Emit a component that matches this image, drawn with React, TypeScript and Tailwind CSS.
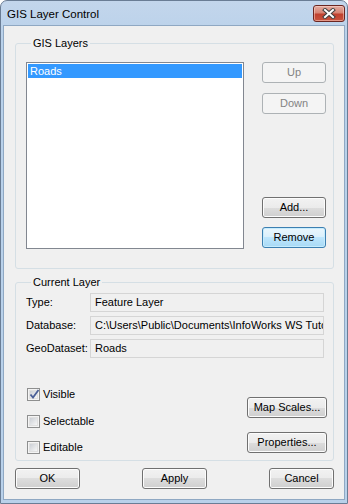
import React from "react";

const font = { fontFamily: '"Liberation Sans", Arial, sans-serif' };

function Btn({
  children,
  disabled,
  focused,
  w = "w-[65px]",
}: {
  children: React.ReactNode;
  disabled?: boolean;
  focused?: boolean;
  w?: string;
}) {
  let cls =
    "h-[21px] rounded-[3px] border flex items-center justify-center text-[11px] leading-[13px] ";
  if (disabled) {
    cls += "border-[#adb2b5] bg-[#f4f4f4] text-[#838383]";
  } else if (focused) {
    cls +=
      "border-[#3c7fb1] text-black bg-[linear-gradient(#eaf6fd_0%,#d9f0fc_50%,#bee6fd_50%,#a7d9f5_100%)] shadow-[inset_0_0_0_1px_#c6ecfd]";
  } else {
    cls +=
      "border-[#707070] text-black bg-[linear-gradient(#f2f2f2_0%,#ebebeb_50%,#dddddd_50%,#cfcfcf_100%)] shadow-[inset_0_0_0_1px_#fcfcfc]";
  }
  return <div className={`${cls} ${w}`}>{children}</div>;
}

function Check({ checked, label }: { checked?: boolean; label: string }) {
  return (
    <div className="flex items-center h-[13px]">
      <div className="w-[13px] h-[13px] border border-[#8e8f8f] bg-[#f4f4f4] p-[1px]">
        <div className="w-full h-full bg-[linear-gradient(135deg,#cbcfd5,#f6f6f6)] border border-[#e0e0e0] relative">
          {checked && (
            <svg
              className="absolute left-[-1px] top-[-2px]"
              width="11"
              height="11"
              viewBox="0 0 11 11"
            >
              <path
                d="M1.5 5.5 L4 8.5 L9.5 1"
                fill="none"
                stroke="#4a5f97"
                strokeWidth="1.8"
              />
            </svg>
          )}
        </div>
      </div>
      <span className="ml-[3px] text-[11px] leading-[13px] text-black">{label}</span>
    </div>
  );
}

function Field({ label, value }: { label: string; value: string }) {
  return (
    <div className="flex items-center h-[19px]">
      <div className="w-[64px] text-[11px] leading-[13px]">{label}</div>
      <div className="w-[234px] h-[19px] border border-[#d5d5d5] bg-[#f0f0f0] flex items-center pl-[4px] overflow-hidden whitespace-nowrap text-[11px] leading-[13px]">
        {value}
      </div>
    </div>
  );
}

export default function App() {
  return (
    <div
      className="w-[348px] h-[504px] bg-[linear-gradient(#c3d6ec,#b9d1ea_40px,#b9d1ea)] border border-[#6a7d95] rounded-t-[7px] flex flex-col text-black"
      style={font}
    >
      {/* title bar */}
      <div className="h-[24px] flex items-start shrink-0">
        <div className="pl-[6px] pt-[6px] text-[11.5px] leading-[14px] text-black">
          GIS Layer Control
        </div>
        <div className="ml-auto mr-[2px] mt-[4px] w-[32px] h-[17px] rounded-[3px] border border-[#6b2621] bg-[linear-gradient(#e3aca2_0%,#d78474_45%,#c0412f_55%,#c9543f_100%)] shadow-[inset_0_0_0_1px_rgba(255,220,210,0.5)] flex items-center justify-center">
          <svg width="14" height="11" viewBox="0 0 14 11">
            <path
              d="M3 2 L11 9 M11 2 L3 9"
              stroke="#3f3f3f"
              strokeWidth="4"
              strokeLinecap="square"
            />
            <path
              d="M3 2 L11 9 M11 2 L3 9"
              stroke="#ffffff"
              strokeWidth="2"
              strokeLinecap="square"
            />
          </svg>
        </div>
      </div>

      {/* client */}
      <div className="flex-1 mx-[2px] mb-[3px] border border-[#8fa8c3] bg-[#f0f0f0] pl-[11px] pr-[10px] pt-[10px] flex flex-col">
        <fieldset className="border border-[#d5dfe5] rounded-[3px] h-[233px] pl-[10px] pr-[7px] pt-[12px] pb-[19px] min-w-0">
          <legend className="ml-[5px] px-[2px] text-[11px] leading-[14px]">GIS Layers</legend>
          <div className="flex">
            <div className="w-[218px] h-[187px] border border-[#828790] bg-white p-[1px]">
              <div className="h-[14px] bg-[#3399ff] text-white text-[11px] leading-[14px] pl-[2px]">
                Roads
              </div>
            </div>
            <div className="ml-[18px] flex flex-col">
              <Btn disabled w="w-[64px]">Up</Btn>
              <div className="mt-[10px]">
                <Btn disabled w="w-[64px]">Down</Btn>
              </div>
              <div className="mt-auto">
                <Btn w="w-[64px]">Add...</Btn>
              </div>
              <div className="mt-[9px] mb-[1px]">
                <Btn focused w="w-[64px]">Remove</Btn>
              </div>
            </div>
          </div>
        </fieldset>

        <fieldset className="mt-[6px] border border-[#d5dfe5] rounded-[3px] pl-[10px] pr-[6px] pt-[4px] pb-[6px] min-w-0">
          <legend className="ml-[5px] px-[2px] text-[11px] leading-[14px]">Current Layer</legend>
          <div className="flex flex-col gap-[4px]">
            <Field label="Type:" value="Feature Layer" />
            <Field
              label="Database:"
              value="C:\Users\Public\Documents\InfoWorks WS Tutorial\GIS"
            />
            <Field label="GeoDataset:" value="Roads" />
          </div>
          <div className="mt-[30px] flex items-start justify-between">
            <div className="flex flex-col pl-[1px]">
              <Check checked label="Visible" />
              <div className="mt-[14px]">
                <Check label="Selectable" />
              </div>
              <div className="mt-[13px]">
                <Check label="Editable" />
              </div>
            </div>
            <div className="flex flex-col mt-[9px]">
              <Btn w="w-[80px]">Map Scales...</Btn>
              <div className="mt-[14px]">
                <Btn w="w-[80px]">Properties...</Btn>
              </div>
            </div>
          </div>
        </fieldset>

        <div className="mt-[7px] flex justify-between">
          <Btn>OK</Btn>
          <Btn>Apply</Btn>
          <Btn>Cancel</Btn>
        </div>
      </div>
    </div>
  );
}
